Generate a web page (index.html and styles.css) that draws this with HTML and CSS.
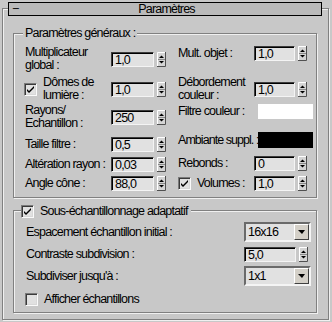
FILE: index.html
```html
<!DOCTYPE html>
<html lang="fr">
<head>
    <meta charset="UTF-8">
    <meta name="viewport" content="width=device-width, initial-scale=1.0">
    <title>Paramètres</title>
    <link rel="stylesheet" href="styles.css">
</head>
<body>
    <div class="rollout">
        <div class="rollout-title">
            <span class="toggle">−</span>
            <span class="title-text">Paramètres</span>
        </div>

        <div class="rollout-body">
            <div class="group group-general">
                <div class="group-label">Paramètres généraux :</div>

                <div class="col col-left">
                    <div class="row">
                        <span class="lbl">Multiplicateur<br>global :</span>
                        <div class="spinner"><span class="field">1,0</span><svg class="arrows" width="9" height="15" viewBox="0 0 9 15"><rect class="face" width="9" height="15"/><path class="hi" d="M.5 14V.5H8"/><path class="lo" d="M0 14.5H8.5V0"/><path class="mid" d="M1 7.5H8"/><path d="M2 6h5L4.5 3.5z"/><path d="M2 9h5L4.5 11.5z"/></svg></div>
                    </div>
                    <div class="row">
                        <span class="lbl lbl-check"><span class="check checked"><svg width="11" height="11" viewBox="0 0 11 11"><path d="M2 5l2 2 5-5v2l-5 5-2-2z"/></svg></span>Dômes de<br>lumière :</span>
                        <div class="spinner"><span class="field">1,0</span><svg class="arrows" width="9" height="15" viewBox="0 0 9 15"><rect class="face" width="9" height="15"/><path class="hi" d="M.5 14V.5H8"/><path class="lo" d="M0 14.5H8.5V0"/><path class="mid" d="M1 7.5H8"/><path d="M2 6h5L4.5 3.5z"/><path d="M2 9h5L4.5 11.5z"/></svg></div>
                    </div>
                    <div class="row">
                        <span class="lbl">Rayons/<br>Echantillon :</span>
                        <div class="spinner"><span class="field">250</span><svg class="arrows" width="9" height="15" viewBox="0 0 9 15"><rect class="face" width="9" height="15"/><path class="hi" d="M.5 14V.5H8"/><path class="lo" d="M0 14.5H8.5V0"/><path class="mid" d="M1 7.5H8"/><path d="M2 6h5L4.5 3.5z"/><path d="M2 9h5L4.5 11.5z"/></svg></div>
                    </div>
                    <div class="row">
                        <span class="lbl">Taille filtre :</span>
                        <div class="spinner"><span class="field">0,5</span><svg class="arrows" width="9" height="15" viewBox="0 0 9 15"><rect class="face" width="9" height="15"/><path class="hi" d="M.5 14V.5H8"/><path class="lo" d="M0 14.5H8.5V0"/><path class="mid" d="M1 7.5H8"/><path d="M2 6h5L4.5 3.5z"/><path d="M2 9h5L4.5 11.5z"/></svg></div>
                    </div>
                    <div class="row">
                        <span class="lbl">Altération rayon :</span>
                        <div class="spinner"><span class="field">0,03</span><svg class="arrows" width="9" height="15" viewBox="0 0 9 15"><rect class="face" width="9" height="15"/><path class="hi" d="M.5 14V.5H8"/><path class="lo" d="M0 14.5H8.5V0"/><path class="mid" d="M1 7.5H8"/><path d="M2 6h5L4.5 3.5z"/><path d="M2 9h5L4.5 11.5z"/></svg></div>
                    </div>
                    <div class="row">
                        <span class="lbl">Angle cône :</span>
                        <div class="spinner"><span class="field">88,0</span><svg class="arrows" width="9" height="15" viewBox="0 0 9 15"><rect class="face" width="9" height="15"/><path class="hi" d="M.5 14V.5H8"/><path class="lo" d="M0 14.5H8.5V0"/><path class="mid" d="M1 7.5H8"/><path d="M2 6h5L4.5 3.5z"/><path d="M2 9h5L4.5 11.5z"/></svg></div>
                    </div>
                </div>

                <div class="col col-right">
                    <div class="row">
                        <span class="lbl">Mult. objet :</span>
                        <div class="spinner"><span class="field">1,0</span><svg class="arrows" width="9" height="15" viewBox="0 0 9 15"><rect class="face" width="9" height="15"/><path class="hi" d="M.5 14V.5H8"/><path class="lo" d="M0 14.5H8.5V0"/><path class="mid" d="M1 7.5H8"/><path d="M2 6h5L4.5 3.5z"/><path d="M2 9h5L4.5 11.5z"/></svg></div>
                    </div>
                    <div class="row">
                        <span class="lbl">Débordement<br>couleur :</span>
                        <div class="spinner"><span class="field">1,0</span><svg class="arrows" width="9" height="15" viewBox="0 0 9 15"><rect class="face" width="9" height="15"/><path class="hi" d="M.5 14V.5H8"/><path class="lo" d="M0 14.5H8.5V0"/><path class="mid" d="M1 7.5H8"/><path d="M2 6h5L4.5 3.5z"/><path d="M2 9h5L4.5 11.5z"/></svg></div>
                    </div>
                    <div class="row row-swatch">
                        <span class="lbl">Filtre couleur :</span>
                        <span class="swatch swatch-white"></span>
                    </div>
                    <div class="row row-swatch">
                        <span class="lbl lbl-tight">Ambiante suppl. :</span>
                        <span class="swatch swatch-black"></span>
                    </div>
                    <div class="row">
                        <span class="lbl">Rebonds :</span>
                        <div class="spinner"><span class="field">0</span><svg class="arrows" width="9" height="15" viewBox="0 0 9 15"><rect class="face" width="9" height="15"/><path class="hi" d="M.5 14V.5H8"/><path class="lo" d="M0 14.5H8.5V0"/><path class="mid" d="M1 7.5H8"/><path d="M2 6h5L4.5 3.5z"/><path d="M2 9h5L4.5 11.5z"/></svg></div>
                    </div>
                    <div class="row">
                        <span class="lbl lbl-check"><span class="check checked"><svg width="11" height="11" viewBox="0 0 11 11"><path d="M2 5l2 2 5-5v2l-5 5-2-2z"/></svg></span>Volumes :</span>
                        <div class="spinner"><span class="field">1,0</span><svg class="arrows" width="9" height="15" viewBox="0 0 9 15"><rect class="face" width="9" height="15"/><path class="hi" d="M.5 14V.5H8"/><path class="lo" d="M0 14.5H8.5V0"/><path class="mid" d="M1 7.5H8"/><path d="M2 6h5L4.5 3.5z"/><path d="M2 9h5L4.5 11.5z"/></svg></div>
                    </div>
                </div>
            </div>

            <div class="group group-adaptive">
                <div class="group-label"><span class="check checked"><svg width="11" height="11" viewBox="0 0 11 11"><path d="M2 5l2 2 5-5v2l-5 5-2-2z"/></svg></span>Sous-échantillonnage adaptatif</div>

                <div class="arow">
                    <span class="lbl">Espacement échantillon initial :</span>
                    <div class="dropdown"><span class="dd-value">16x16</span><span class="dd-btn"></span></div>
                </div>
                <div class="arow">
                    <span class="lbl">Contraste subdivision :</span>
                    <div class="spinner spinner-wide"><span class="field">5,0</span><svg class="arrows" width="9" height="15" viewBox="0 0 9 15"><rect class="face" width="9" height="15"/><path class="hi" d="M.5 14V.5H8"/><path class="lo" d="M0 14.5H8.5V0"/><path class="mid" d="M1 7.5H8"/><path d="M2 6h5L4.5 3.5z"/><path d="M2 9h5L4.5 11.5z"/></svg></div>
                </div>
                <div class="arow">
                    <span class="lbl">Subdiviser jusqu'à :</span>
                    <div class="dropdown"><span class="dd-value">1x1</span><span class="dd-btn"></span></div>
                </div>
                <div class="arow arow-check">
                    <span class="lbl lbl-check"><span class="check"></span>Afficher échantillons</span>
                </div>
            </div>
        </div>
    </div>
</body>
</html>
```

FILE: styles.css
```css
:root {
    --bg-color: #c8c8c8;
    --field-color: #e1e1e1;
    --line-color: #808080;
    --light-color: #f0f0f0;
    --text-color: #000;
}

* {
    margin: 0;
    padding: 0;
    box-sizing: border-box;
}

body {
    width: 332px;
    height: 322px;
    overflow: hidden;
    background-color: var(--bg-color);
    color: var(--text-color);
    font-family: "Liberation Sans", Arial, sans-serif;
    font-size: 12.5px;
    letter-spacing: -0.8px;
    line-height: 13px;
}

/* rollout header + frame */
.rollout-title {
    position: relative;
    z-index: 1;
    width: 314px;
    height: 14px;
    margin: 2px 0 0 8px;
    border: 1px solid #000;
    background-color: #bababa;
    display: flex;
    align-items: center;
}

.toggle {
    width: 0;
    padding-left: 3px;
}

.title-text {
    flex: 1;
    text-align: center;
}

.rollout-body {
    width: 327px;
    height: 312px;
    margin: -8px 0 0 2px;
    padding: 24px 11px 0 10px;
    border: 1px solid var(--line-color);
    box-shadow: inset 1px 1px 0 var(--light-color), 1px 1px 0 var(--light-color);
}

/* group boxes */
.group {
    position: relative;
    border: 1px solid var(--line-color);
    box-shadow: inset 1px 1px 0 var(--light-color), 1px 1px 0 var(--light-color);
}

.group-label {
    position: absolute;
    top: -7px;
    left: 9px;
    padding: 0 2px;
    background-color: var(--bg-color);
    display: flex;
    align-items: center;
}

.group-general {
    height: 165px;
    padding: 12px 3px 0 11px;
    display: grid;
    grid-template-columns: 141px 135px;
    column-gap: 12px;
    align-items: start;
}

.group-adaptive {
    height: 103px;
    margin-top: 12px;
    padding: 11px 5px 0 12px;
}

.group-adaptive .group-label {
    top: -6px;
    left: 7px;
    padding: 0 3px 0 0;
}

/* rows */
.col {
    display: flex;
    flex-direction: column;
}

.row {
    height: 15px;
    display: grid;
    align-items: center;
}

.col-left .row {
    grid-template-columns: 86px auto;
}

.col-right .row {
    grid-template-columns: 76px auto;
}

.col-right .row-swatch {
    grid-template-columns: 80px auto;
}

.col-left .row:nth-child(2) { margin-top: 15px; }
.col-left .row:nth-child(3) { margin-top: 13px; }
.col-left .row:nth-child(4) { margin-top: 18px; }
.col-left .row:nth-child(5) { margin-top: 5px; }
.col-left .row:nth-child(6) { margin-top: 4px; }

.col-right .row:nth-child(2) { margin-top: 15px; }
.col-right .row:nth-child(3) { margin-top: 13px; }
.col-right .row:nth-child(4) { margin-top: 13px; height: 16px; }
.col-right .row:nth-child(5) { margin-top: 8px; }
.col-right .row:nth-child(6) { margin-top: 4px; height: 16px; }

.lbl {
    white-space: nowrap;
}

.lbl-tight {
    letter-spacing: -0.95px;
}

.lbl-check {
    display: flex;
    align-items: center;
}

.col-left .lbl-check {
    margin-left: -1px;
}

.arow {
    display: grid;
    grid-template-columns: 218px auto;
    align-items: center;
    height: 20px;
}

.arow:nth-child(3) { margin-top: 5px; height: 15px; }
.arow:nth-child(4) { margin-top: 4px; }
.arow:nth-child(5) { margin-top: 7px; height: 13px; }

.arow-check {
    grid-template-columns: auto;
    margin-left: -1px;
}

/* controls */
.spinner {
    display: flex;
    align-items: center;
    gap: 3px;
}

.field {
    width: 43px;
    height: 15px;
    padding: 1px 0 0 3px;
    background-color: var(--field-color);
    border: 1px solid;
    border-color: #3c3c3c #f4f4f4 #f4f4f4 #3c3c3c;
    box-shadow: inset 1px 1px 0 #000;
    line-height: 12px;
}

.col-right .field {
    width: 41px;
}

.spinner-wide .field {
    width: 52px;
}

.arrows {
    display: block;
}

.arrows .face { fill: #d4d4d4; }
.arrows .hi { stroke: #fff; fill: none; }
.arrows .lo { stroke: #505050; fill: none; }
.arrows .mid { stroke: #8a8a8a; }
.arrows path { fill: #000; }

.swatch {
    display: block;
    width: 55px;
    height: 100%;
}

.swatch-white {
    background-color: #fff;
}

.swatch-black {
    background-color: #000;
}

.check {
    width: 13px;
    height: 13px;
    margin-right: 6px;
    flex: none;
    background-color: var(--field-color);
    border: 1px solid;
    border-color: #7a7a7a #fafafa #fafafa #7a7a7a;
    box-shadow: inset 1px 1px 0 #3a3a3a, inset -1px -1px 0 #d8d8d8;
    display: flex;
    align-items: center;
    justify-content: center;
}

.check svg {
    display: block;
}

.check path {
    fill: #000;
}

.dropdown {
    width: 67px;
    height: 20px;
    border: 2px solid;
    border-color: #6a6a6a #f4f4f4 #f4f4f4 #6a6a6a;
    background-color: var(--field-color);
    display: flex;
    align-items: center;
}

.dd-value {
    flex: 1;
    padding-left: 2px;
}

.dd-btn {
    width: 15px;
    height: 16px;
    background-color: #d4d0c8;
    border: 1px solid;
    border-color: #fff #404040 #404040 #fff;
    display: flex;
    align-items: center;
    justify-content: center;
}

.dd-btn::before {
    content: "";
    border-left: 4px solid transparent;
    border-right: 3px solid transparent;
    border-top: 4px solid #000;
}
```
